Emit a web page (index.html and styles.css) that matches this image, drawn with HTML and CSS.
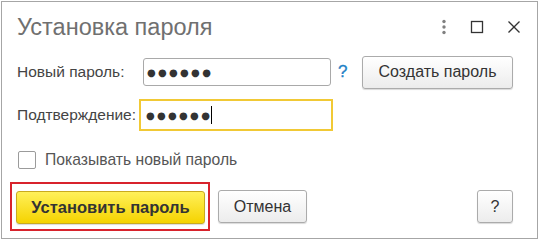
FILE: index.html
```html
<!DOCTYPE html>
<html>
    <head>
        <title>Установка пароля</title>
        <link rel="stylesheet" href="styles.css">
    </head>
    <body>
        <div class="window">
            <div class="header">
                <h1 class="title">Установка пароля</h1>
                <div class="tools">
                    <svg class="tool" width="12" height="16" viewBox="0 0 12 16">
                        <circle cx="6" cy="2.5" r="1.7" fill="#808080"/>
                        <circle cx="6" cy="8" r="1.7" fill="#808080"/>
                        <circle cx="6" cy="13.5" r="1.7" fill="#808080"/>
                    </svg>
                    <svg class="tool" width="14" height="14" viewBox="0 0 14 14">
                        <rect x="1.5" y="1.5" width="11" height="11" fill="none" stroke="#333" stroke-width="1.3"/>
                    </svg>
                    <svg class="tool" width="14" height="14" viewBox="0 0 14 14">
                        <path d="M1.5 1.5 L12.5 12.5 M12.5 1.5 L1.5 12.5" stroke="#333" stroke-width="1.3" fill="none"/>
                    </svg>
                </div>
            </div>

            <div class="row row-first">
                <label class="label">Новый пароль:</label>
                <div class="field"><span class="dots">●●●●●●</span></div>
                <span class="hint">?</span>
                <button class="btn btn-create">Создать пароль</button>
            </div>

            <div class="row row-second">
                <label class="label label-short">Подтверждение:</label>
                <div class="field field-focus"><span class="dots">●●●●●●</span><span class="caret"></span></div>
            </div>

            <div class="row row-check">
                <span class="checkbox"></span>
                <span class="check-text">Показывать новый пароль</span>
            </div>

            <div class="footer">
                <div class="highlight">
                    <button class="btn btn-main">Установить пароль</button>
                </div>
                <button class="btn btn-cancel">Отмена</button>
                <button class="btn btn-help">?</button>
            </div>
        </div>
    </body>
</html>
```

FILE: styles.css
```css
body {
  margin: 1px;
  padding: 0;
  font-family: "Liberation Sans", Arial, sans-serif;
  background-color: #ffffff;
}

.window {
  box-sizing: border-box;
  width: 537px;
  height: 238px;
  border: 1px solid #a6a6a6;
  padding: 0 24px 0 15px;
}

.header {
  display: flex;
  align-items: center;
  height: 50px;
}

.title {
  margin: 0;
  font-size: 23.5px;
  font-weight: normal;
  color: #707070;
  flex: 1;
}

.tools {
  display: flex;
  align-items: center;
  margin-right: -8px;
}

.tool {
  display: block;
}

.tool:nth-child(1) {
  margin-right: 20px;
}

.tool:nth-child(2) {
  margin-right: 23px;
}

.row {
  display: flex;
  align-items: center;
}

.row-first {
  height: 36px;
  margin-top: 2px;
}

.row-second {
  height: 36px;
  margin-top: 7px;
}

.row-check {
  height: 24px;
  margin-top: 15px;
}

.label {
  width: 126px;
  font-size: 15.5px;
  color: #444;
}

.label-short {
  width: 122px;
}

.field {
  display: flex;
  align-items: center;
  box-sizing: border-box;
  width: 188px;
  height: 28px;
  border: 1px solid #a9a9a9;
  border-radius: 3px;
  padding-left: 3px;
}

.field-focus {
  width: 194px;
  height: 32px;
  border: 2px solid #f1c935;
  border-radius: 0;
  padding-left: 5px;
}

.dots {
  font-family: "DejaVu Sans", sans-serif;
  font-size: 10px;
  letter-spacing: 2.3px;
  color: #333;
}

.caret {
  width: 1px;
  height: 18px;
  background-color: #000;
  margin-left: -1px;
}

.hint {
  margin-left: 7px;
  width: 10px;
  font-size: 17px;
  color: #1f82c6;
  -webkit-text-stroke: 0.3px #1f82c6;
}

.btn {
  box-sizing: border-box;
  height: 33px;
  font-family: "Liberation Sans", Arial, sans-serif;
  font-size: 16px;
  font-weight: normal;
  color: #333;
  background: linear-gradient(#ffffff, #ececec);
  border: 1px solid #ababab;
  border-radius: 3px;
  box-shadow: 0 1px 1px rgba(0, 0, 0, 0.15);
  padding: 0;
}

.btn-create {
  margin-left: 14px;
  width: 151px;
}

.checkbox {
  box-sizing: border-box;
  width: 18px;
  height: 18px;
  border: 1px solid #9b9b9b;
  border-radius: 2px;
  margin-left: 1px;
}

.check-text {
  margin-left: 9px;
  font-size: 15.7px;
  color: #555;
}

.footer {
  display: flex;
  align-items: center;
  margin-top: 10px;
  margin-left: -7px;
}

.highlight {
  box-sizing: border-box;
  width: 200px;
  height: 49px;
  border: 2px solid #d8232c;
  padding: 7px 3px 0 4px;
}

.btn-main {
  width: 189px;
  font-weight: bold;
  font-size: 16.5px;
  color: #333;
  background: linear-gradient(#fff05a, #f5d300);
  border-color: #c9aa1e;
}

.btn-cancel {
  width: 89px;
  margin-left: 8px;
}

.btn-help {
  width: 36px;
  margin-left: auto;
}
```
